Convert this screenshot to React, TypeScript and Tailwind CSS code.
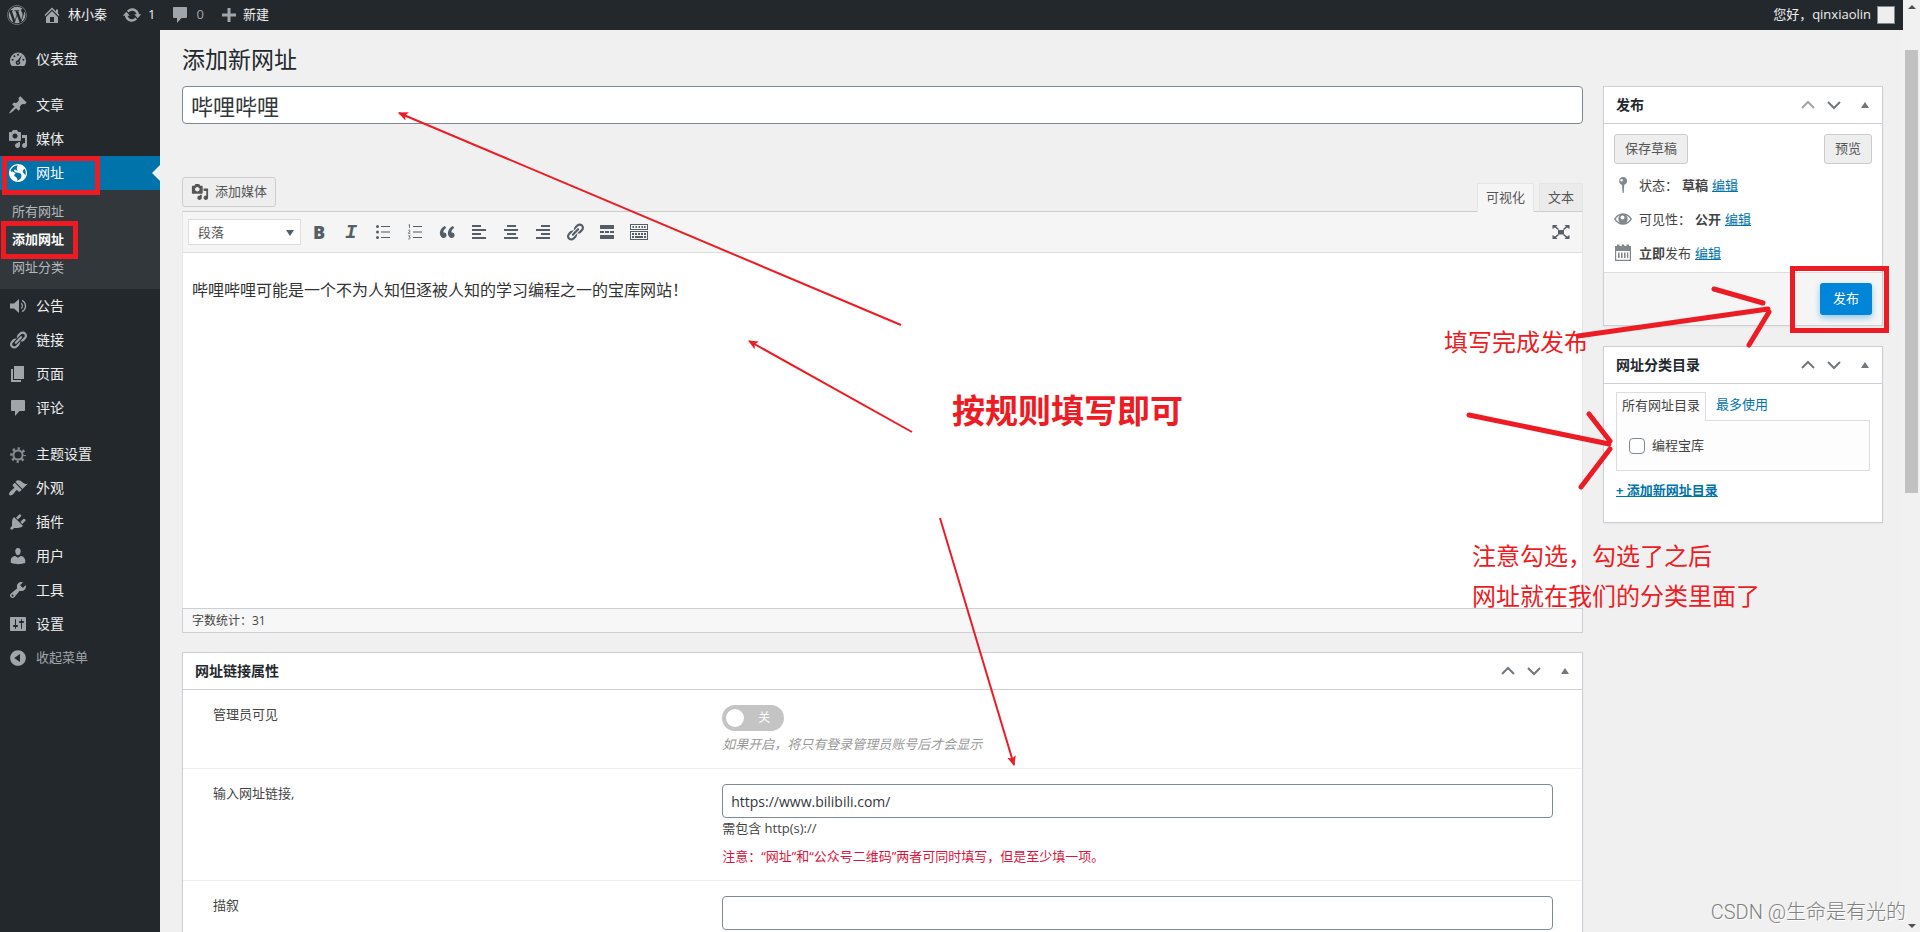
import React from "react";
import { FaWordpress } from "react-icons/fa";

interface MenuEntry {
  label: string;
  icon: React.ReactNode;
}

interface DashIconProps {
  d: string;
  className?: string;
}

const FONT = "font-['Open_Sans','Noto_Sans_CJK_SC',sans-serif]";

// 20x20 glyphs used through the admin screens
const DashIcon: React.FC<DashIconProps> = ({ d, className = "size-5" }) => (
  <svg viewBox="0 0 20 20" fill="currentColor" fillRule="evenodd" className={`shrink-0 ${className}`} aria-hidden="true">
    <path d={d} />
  </svg>
);

const ICONS = {
  home: "M16 8.5l1.53 1.53-1.06 1.06L10 4.6l-6.47 6.49-1.06-1.06L10 2.5l4 4v-2h2v4zm-6-2.46l6 5.99V18H4v-5.97zM12 17v-5H8v5h4z",
  update:
    "M10.2 3.28c3.53 0 6.43 2.61 6.92 6h2.08l-3.5 4-3.5-4h2.32c-.45-1.97-2.21-3.45-4.32-3.45-1.45 0-2.73.71-3.54 1.78L4.95 5.66C6.23 4.2 8.11 3.28 10.2 3.28zm-.4 13.44c-3.52 0-6.43-2.61-6.92-6H.8l3.5-4c1.17 1.33 2.33 2.67 3.5 4H5.48c.45 1.97 2.21 3.45 4.32 3.45 1.45 0 2.73-.71 3.54-1.78l1.71 1.95c-1.28 1.46-3.15 2.38-5.25 2.38z",
  comment: "M4 2h12c.6 0 1 .4 1 1v9c0 .6-.4 1-1 1h-4.5L7 18v-5H4c-.6 0-1-.4-1-1V3c0-.6.4-1 1-1z",
  plus: "M8.5 3h3v5.5H17v3h-5.5V17h-3v-5.5H3v-3h5.5z",
  dashboard:
    "M3.76 17h12.48c1.34-1.63 1.98-3.76 1.75-6C17.54 6.97 14.14 3.5 10 3.5S2.46 6.97 2.01 11c-.23 2.24.41 4.37 1.75 6zM10 4.8a1 1 0 1 1 0 2 1 1 0 0 1 0-2zM6.4 6.2a1 1 0 1 1 0 2 1 1 0 0 1 0-2zM4.6 9.8a1 1 0 1 1 0 2 1 1 0 0 1 0-2zM15.4 9.8a1 1 0 1 1 0 2 1 1 0 0 1 0-2zM13.9 5.9l-2.3 6.3a2.2 2.2 0 1 1-2-.8zM10 13a.8.8 0 1 0 0 1.6.8.8 0 0 0 0-1.6z",
  post: "M10.44 3.02l1.82-1.82 6.36 6.35-1.83 1.82c-1.05-.68-2.48-.57-3.41.36l-.75.75c-.92.93-1.04 2.35-.35 3.41l-1.83 1.82-2.41-2.41-2.8 2.79c-.42.42-3.38 2.71-3.8 2.29s1.86-3.39 2.28-3.81l2.79-2.79L4.1 9.36l1.83-1.82c1.05.69 2.48.57 3.4-.36l.75-.75c.93-.92 1.05-2.35.36-3.41z",
  media:
    "M13 11V4c0-.55-.45-1-1-1h-1.67L9 1H5L3.67 3H2c-.55 0-1 .45-1 1v7c0 .55.45 1 1 1h10c.55 0 1-.45 1-1zM7 4.5c1.38 0 2.5 1.12 2.5 2.5S8.38 9.5 7 9.5 4.5 8.38 4.5 7 5.62 4.5 7 4.5zM14 6h5v10.5c0 1.38-1.12 2.5-2.5 2.5S14 17.88 14 16.5s1.12-2.5 2.5-2.5c.17 0 .34.02.5.05V9h-3V6zm-4 8.05V13h2v3.5c0 1.38-1.12 2.5-2.5 2.5S7 17.88 7 16.5 8.12 14 9.5 14c.17 0 .34.02.5.05z",
  globe:
    "M9 0C4.03 0 0 4.03 0 9s4.03 9 9 9 9-4.03 9-9-4.03-9-9-9zm3.46 11.95c0 1.47-.8 3.3-4.06 4.7.3-4.17-2.52-3.69-3.2-5 .126-1.1.804-2.063 1.8-2.55-1.552-.266-3-.96-4.18-2 .05.47.28.904.64 1.21-.782-.295-1.458-.817-1.94-1.5.977-3.225 3.883-5.482 7.25-5.63-.84 1.38-1.5 4.13 0 5.57C7.23 7 6.26 5 5.41 5.79c-1.13 1.06.33 2.51 3.42 3.08 3.29.59 3.66 1.58 3.63 3.08zm1.34-4c-.32-1.11.62-2.23 1.69-3.14 1.356 1.955 1.67 4.45.84 6.68-.77-1.89-2.17-2.32-2.53-3.54z",
  volume:
    "M2 7.5h4L11 3v14l-5-4.5H2zM13 6.8c1.3.7 2 1.8 2 3.2s-.7 2.5-2 3.2v-1.4c.6-.5.9-1.1.9-1.8s-.3-1.3-.9-1.8zM14 3.8c2.7 1 4.2 3.3 4.2 6.2s-1.5 5.2-4.2 6.2v-1.5c1.8-.9 2.8-2.6 2.8-4.7S15.8 6.2 14 5.3z",
  links:
    "M17.74 2.76c1.68 1.69 1.68 4.41 0 6.1l-1.53 1.52c-1.12 1.12-2.7 1.47-4.14 1.09l2.62-2.61.76-.77.76-.76c.84-.84.84-2.2 0-3.04-.84-.85-2.2-.85-3.04 0l-.77.76-3.38 3.38c-.37-1.44-.02-3.02 1.1-4.14l1.52-1.53c1.69-1.68 4.42-1.68 6.1 0zM8.59 13.43l5.34-5.34c.42-.42.42-1.1 0-1.52-.44-.43-1.13-.39-1.53 0l-5.33 5.34c-.42.42-.42 1.1 0 1.52.44.43 1.13.39 1.52 0zm-.76 2.29l4.14-4.15c.38 1.44.03 3.02-1.09 4.14l-1.52 1.53c-1.69 1.68-4.41 1.68-6.1 0-1.68-1.68-1.68-4.42 0-6.1l1.53-1.52c1.12-1.12 2.7-1.47 4.14-1.1l-4.14 4.15c-.85.84-.85 2.2 0 3.05.84.84 2.2.84 3.04 0z",
  page: "M6 15V2h10v13H6zm-1 1h8v2H3V5h2v11z",
  appearance:
    "M14.48 11.06L7.41 3.99l1.5-1.5c.5-.56 2.3-.47 3.51.32 1.21.8 1.43 1.28 2.91 2.1 1.18.64 2.45 1.26 4.45.85zm-.71.71L6.7 4.7 4.93 6.47c-.39.39-.39 1.02 0 1.41l1.06 1.06c.39.39.39 1.03 0 1.42-.6.6-1.43 1.11-2.21 1.69-.35.26-.7.53-1.01.84C1.43 14.23.4 16.08 1.4 17.07c.99 1 2.84-.03 4.18-1.36.31-.31.58-.66.85-1.02.57-.78 1.08-1.61 1.69-2.21.39-.39 1.02-.39 1.41 0l1.06 1.06c.39.39 1.02.39 1.41 0z",
  plugins:
    "M13.11 4.36L9.87 7.6 8 5.73l3.24-3.24c.35-.34 1.05-.2 1.56.32.52.51.66 1.21.31 1.55zm-8 1.77l.91-1.12 9.01 9.01-1.19.84c-.71.71-2.63 1.16-3.82 1.16H6.14L4.9 17.26c-.59.59-1.54.59-2.12 0-.59-.58-.59-1.53 0-2.12l1.24-1.24v-3.88c0-1.13.4-3.19 1.09-3.89zm7.26 3.97l3.24-3.24c.34-.35 1.04-.21 1.55.31.52.51.66 1.21.31 1.55l-3.24 3.25z",
  users:
    "M10 9.25c-2.27 0-2.73-3.44-2.73-3.44C7 4.02 7.82 2 9.97 2c2.16 0 2.98 2.02 2.71 3.81 0 0-.41 3.44-2.68 3.44zm0 2.57L12.72 10c2.39 0 4.52 2.33 4.52 4.53v2.49s-3.65 1.13-7.24 1.13c-3.65 0-7.24-1.13-7.24-1.13v-2.49c0-2.25 1.94-4.48 4.47-4.48z",
  tools:
    "M16.68 9.77c-1.34 1.34-3.3 1.67-4.95.99l-5.41 6.52c-.99.99-2.59.99-3.58 0s-.99-2.59 0-3.57l6.52-5.42c-.68-1.65-.35-3.61.99-4.95 1.28-1.28 3.12-1.62 4.72-1.06l-2.89 2.89 2.82 2.82 2.86-2.87c.53 1.58.18 3.39-1.08 4.65zM3.81 16.21c.4.39 1.04.39 1.43 0 .4-.4.4-1.04 0-1.43-.39-.4-1.03-.4-1.43 0-.39.39-.39 1.03 0 1.43z",
  settings:
    "M18 16V4c0-.55-.45-1-1-1H3c-.55 0-1 .45-1 1v12c0 .55.45 1 1 1h14c.55 0 1-.45 1-1zM8 11h1c.55 0 1 .45 1 1s-.45 1-1 1H8v1.5c0 .28-.22.5-.5.5s-.5-.22-.5-.5V13H6c-.55 0-1-.45-1-1s.45-1 1-1h1V5.5c0-.28.22-.5.5-.5s.5.22.5.5V11zm5-2h-1c-.55 0-1-.45-1-1s.45-1 1-1h1V5.5c0-.28.22-.5.5-.5s.5.22.5.5V7h1c.55 0 1 .45 1 1s-.45 1-1 1h-1v5.5c0 .28-.22.5-.5.5s-.5-.22-.5-.5V9z",
  collapse:
    "M10 2.16c4.33 0 7.84 3.51 7.84 7.84s-3.51 7.84-7.84 7.84S2.16 14.33 2.16 10 5.71 2.16 10 2.16zm2 11.72V6.12L6.18 9.97z",
  quote:
    "M9.49 13.22c0-.74-.2-1.38-.61-1.9-.62-.78-1.83-.88-2.53-.72-.29-1.65 1.11-3.75 2.92-4.65L7.88 4c-2.73 1.3-5.42 4.28-4.96 8.05C3.21 14.43 4.59 16 6.54 16c.85 0 1.56-.25 2.12-.75s.83-1.18.83-2.03zm8.05 0c0-.74-.2-1.38-.61-1.9-.63-.78-1.83-.88-2.53-.72-.29-1.65 1.11-3.75 2.92-4.65L15.93 4c-2.73 1.3-5.41 4.28-4.95 8.05.29 2.38 1.66 3.95 3.61 3.95.85 0 1.56-.25 2.12-.75s.83-1.18.83-2.03z",
  alignLeft: "M3 3h9v2H3zM3 7h14v2H3zM3 11h9v2H3zM3 15h14v2H3z",
  alignCenter: "M6 3h9v2H6zM3 7h14v2H3zM6 11h9v2H6zM3 15h14v2H3z",
  alignRight: "M8 3h9v2H8zM3 7h14v2H3zM8 11h9v2H8zM3 15h14v2H3z",
  bullets:
    "M4.5 3a1.5 1.5 0 1 1 0 3 1.5 1.5 0 0 1 0-3zM4.5 8.5a1.5 1.5 0 1 1 0 3 1.5 1.5 0 0 1 0-3zM4.5 14a1.5 1.5 0 1 1 0 3 1.5 1.5 0 0 1 0-3zM8 4h9v1H8zM8 9.500h9v1H8zM8 15h9v1H8z",
  more: "M3 3h14v4H3zM3 9h4v2H3zM8 9h4v2H8zM13 9h4v2h-4zM3 13h14v4H3z",
  kitchen:
    "M1 2h18v6H1zM2 3v4h16V3zM3.5 4H5v2H3.5zM6.5 4H8v2H6.5zM9.5 4H11v2H9.5zM12.5 4H14v2h-1.5zM15 4h1.5v2H15zM1 9h18v9H1zM2 10v7h16v-7zM3 11h2v2H3zM6 11h2v2H6zM9 11h2v2H9zM12 11h2v2h-2zM15 11h2v2h-2zM3 14h2v2H3zM6 14h8v2H6zM15 14h2v2h-2z",
  fullscreen:
    "M7 8h6v4.500H7zM1.500 3h5L5.100 4.400 8 6.900 7 8 3.900 5.500 1.500 7zM18.500 3h-5l1.400 1.400L12 6.900 13 8l3.100-2.500L18.500 7zM1.500 17h5l-1.400-1.400L8 13.100 7 12l-3.100 2.500L1.500 13zM18.500 17h-5l1.400-1.400-2.900-2.500 1-1.100 3.100 2.500 2.400-1.500z",
  pin: "M10 2a4 4 0 0 1 1.3 7.8L10.7 18H9.6L9 9.8A4 4 0 0 1 10 2zM8.6 4a1.300 1.300 0 1 0 0 2.600 1.300 1.300 0 0 0 0-2.600z",
  eye: "M1 10c2.200-3.700 5.300-5.800 9-5.800s6.800 2.100 9 5.800c-2.200 3.700-5.300 5.800-9 5.800S3.200 13.700 1 10zM2.700 10c1.200 1.800 2.600 3 4.200 3.800A5.300 5.300 0 0 1 6.900 6.200C5.300 7 3.900 8.200 2.700 10zM17.300 10c-1.200-1.800-2.600-3-4.200-3.800a5.300 5.300 0 0 1 0 7.600c1.600-.8 3-2 4.200-3.800zM9.500 6.500a2 2 0 1 0 0 4 2 2 0 0 0 0-4z",
  calendar:
    "M4 1.500h2.500V3H8.700V1.500h2.600V3h2.200V1.500H16V3h2v15H2V3h2zM3.200 8v8.800h13.600V8zM5 9.500h1.600V15H5zM8 9.500h1.600V15H8zM11 9.500h1.600V15H11zM13.900 9.500h1.400V15h-1.400z",
};

const GearIcon = () => (
  <svg viewBox="0 0 20 20" fill="none" stroke="currentColor" className="size-5 shrink-0 opacity-80" aria-hidden="true">
    <circle cx="10" cy="11" r="4.600" strokeWidth="2" />
    <circle cx="10" cy="11" r="6.500" strokeWidth="2.600" strokeDasharray="2.300 2.805" strokeDashoffset="1.150" />
  </svg>
);

const NumberedIcon = () => (
  <svg viewBox="0 0 20 20" fill="none" stroke="currentColor" className="size-5" aria-hidden="true">
    <path d="M8 4.500h9M8 10h9M8 15.500h9" />
    <path strokeWidth="0.8" d="M3.500 3.200l1-.7v3.500M3.300 8.500c.6-.8 2-.6 1.700.5L3.300 11.400h2M3.300 13.800h1.800l-1 1.300c1.600 0 1.500 2.200-.9 1.900" />
  </svg>
);

const CONTENT_MENU: MenuEntry[] = [
  { label: "文章", icon: <DashIcon d={ICONS.post} /> },
  { label: "媒体", icon: <DashIcon d={ICONS.media} /> },
];

const MODULE_MENU: MenuEntry[] = [
  { label: "公告", icon: <DashIcon d={ICONS.volume} /> },
  { label: "链接", icon: <DashIcon d={ICONS.links} /> },
  { label: "页面", icon: <DashIcon d={ICONS.page} /> },
  { label: "评论", icon: <DashIcon d={ICONS.comment} /> },
];

const SYSTEM_MENU: MenuEntry[] = [
  { label: "主题设置", icon: <GearIcon /> },
  { label: "外观", icon: <DashIcon d={ICONS.appearance} /> },
  { label: "插件", icon: <DashIcon d={ICONS.plugins} /> },
  { label: "用户", icon: <DashIcon d={ICONS.users} /> },
  { label: "工具", icon: <DashIcon d={ICONS.tools} /> },
  { label: "设置", icon: <DashIcon d={ICONS.settings} /> },
];

const MenuRow: React.FC<MenuEntry> = ({ label, icon }) => (
  <li>
    <a href="#" className="flex h-[34px] items-center gap-2 pl-2 text-sm text-[#eeeeee]">
      <span className="text-[#a0a5aa]">{icon}</span>
      {label}
    </a>
  </li>
);

const AdminBar = () => (
  <header className="flex h-[30px] shrink-0 items-center bg-[#23282d] pr-2 pb-px pl-[7px] text-[13px] text-[#eeeeee]">
    <a href="#" aria-label="WordPress" className="mr-[15px] text-[#a0a5aa]"><FaWordpress size={20} /></a>
    <a href="#" className="mr-[15px] flex items-center gap-1.5">
      <DashIcon d={ICONS.home} className="size-5 text-[#a0a5aa]" />林小秦
    </a>
    <a href="#" className="mr-[15px] flex items-center gap-1.5">
      <DashIcon d={ICONS.update} className="size-5 text-[#a0a5aa]" />1
    </a>
    <a href="#" className="mr-[15px] flex items-center gap-1.5 text-[#a0a5aa]">
      <DashIcon d={ICONS.comment} />0
    </a>
    <a href="#" className="flex items-center gap-1">
      <DashIcon d={ICONS.plus} className="size-5 text-[#a0a5aa]" />新建
    </a>
    <a href="#" className="ml-auto flex items-center gap-1.5">
      您好，qinxiaolin
      <span className="size-[18px] border border-[#82878c] bg-[#eeeeee]" />
    </a>
  </header>
);

const SideMenu = () => (
  <nav className="w-40 shrink-0 bg-[#23282d] pt-3">
    <ul>
      <MenuRow label="仪表盘" icon={<DashIcon d={ICONS.dashboard} />} />
    </ul>
    <ul className="mt-3">
      {CONTENT_MENU.map((item) => <MenuRow key={item.label} {...item} />)}
      <li>
        <a href="#" className="relative flex h-[34px] items-center gap-2 bg-[#0073aa] pl-2 text-sm text-white">
          <svg viewBox="-1 -1 20 20" fill="currentColor" className="size-5" aria-hidden="true"><path d={ICONS.globe} /></svg>
          网址
          <span className="absolute right-0 border-8 border-transparent border-r-[#f0f0f0]" />
        </a>
        <ul className="bg-[#32373c] pt-[7px] pb-2 pl-3 text-[13px] leading-7 text-[#b4b9be]">
          <li><a href="#">所有网址</a></li>
          <li><a href="#" className="font-bold text-white">添加网址</a></li>
          <li><a href="#">网址分类</a></li>
        </ul>
      </li>
      {MODULE_MENU.map((item) => <MenuRow key={item.label} {...item} />)}
    </ul>
    <ul className="mt-3">
      {SYSTEM_MENU.map((item) => <MenuRow key={item.label} {...item} />)}
    </ul>
    <button className="flex h-[34px] items-center gap-2 pl-2 text-[13px] text-[#a0a5aa]">
      <DashIcon d={ICONS.collapse} />收起菜单
    </button>
  </nav>
);

interface PostBoxProps {
  title: string;
  first?: boolean;
  className?: string;
  children: React.ReactNode;
}

const PostBox: React.FC<PostBoxProps> = ({ title, first = false, className = "", children }) => (
  <section className={`border border-[#ccd0d4] bg-white shadow-xs ${className}`}>
    <div className="flex h-[37px] items-center border-b border-[#ccd0d4] pr-[13px] pl-3 text-[#72777c]">
      <h2 className="flex-1 text-sm font-bold text-[#23282d]">{title}</h2>
      <button aria-label="上移" className={`mr-3 ${first ? "text-[#a0a5aa]" : ""}`}>
        <svg viewBox="0 0 14 10" fill="none" stroke="currentColor" strokeWidth="2" className="h-2.5 w-3.5"><path d="M1 8l6-6 6 6" /></svg>
      </button>
      <button aria-label="下移" className="mr-5">
        <svg viewBox="0 0 14 10" fill="none" stroke="currentColor" strokeWidth="2" className="h-2.5 w-3.5"><path d="M1 2l6 6 6-6" /></svg>
      </button>
      <button aria-label="切换面板">
        <svg viewBox="0 0 8 6" fill="currentColor" className="h-1.5 w-2"><path d="M4 0l4 6H0z" /></svg>
      </button>
    </div>
    {children}
  </section>
);

const TOOLBAR: { label: string; icon: React.ReactNode }[] = [
  { label: "粗体", icon: <b className="font-['Open_Sans'] text-lg leading-5 font-extrabold">B</b> },
  { label: "斜体", icon: <i className="pt-0.5 font-['Liberation_Mono'] text-xl leading-5 font-bold">I</i> },
  { label: "项目符号列表", icon: <DashIcon d={ICONS.bullets} /> },
  { label: "编号列表", icon: <NumberedIcon /> },
  { label: "段落引用", icon: <DashIcon d={ICONS.quote} /> },
  { label: "左对齐", icon: <DashIcon d={ICONS.alignLeft} /> },
  { label: "居中对齐", icon: <DashIcon d={ICONS.alignCenter} /> },
  { label: "右对齐", icon: <DashIcon d={ICONS.alignRight} /> },
  { label: "插入链接", icon: <DashIcon d={ICONS.links} /> },
  { label: "插入More标签", icon: <DashIcon d={ICONS.more} /> },
  { label: "工具栏切换", icon: <DashIcon d={ICONS.kitchen} /> },
];

const Editor = () => (
  <div className="mt-[53px]">
    <div className="flex items-end justify-between">
      <button className="mb-1 flex h-[30px] items-center gap-1.5 rounded-[3px] border border-[#cccccc] bg-[#eeeeee] px-2 text-[13px] text-[#555555]">
        <DashIcon d={ICONS.media} className="size-[18px]" />添加媒体
      </button>
      <div className="-mb-px flex gap-[5px] text-[13px] text-[#555555]">
        <button className="relative h-[29px] border border-b-0 border-[#e5e5e5] bg-[#f5f5f5] px-2">可视化</button>
        <button className="h-[29px] border border-[#e5e5e5] border-b-[#cccccc] bg-[#ebebeb] px-2">文本</button>
      </div>
    </div>
    <div className="border border-b-0 border-[#e5e5e5] border-t-[#cccccc] bg-white">
      <div className="flex h-[41px] items-center border-b border-[#dddddd] bg-[#f5f5f5] px-[5px] text-[#555d66]">
        <div className="relative mr-0.5">
          <select aria-label="段落格式" className="h-[26px] w-[113px] appearance-none border border-[#dddddd] bg-white pl-[9px] text-[13px] text-[#555555]">
            <option>段落</option>
          </select>
          <svg viewBox="0 0 8 6" fill="currentColor" className="absolute top-[11px] right-[7px] h-1.5 w-2" aria-hidden="true"><path d="M0 0h8L4 6z" /></svg>
        </div>
        {TOOLBAR.map((tool) => (
          <button key={tool.label} aria-label={tool.label} className="flex size-8 items-center justify-center">{tool.icon}</button>
        ))}
        <button aria-label="全屏" className="ml-auto flex size-8 items-center justify-center"><DashIcon d={ICONS.fullscreen} /></button>
      </div>
      <textarea
        aria-label="正文"
        className="block h-[355px] w-full resize-none px-[9px] pt-[25px] text-base leading-6 text-[#333333] outline-none"
        defaultValue="哔哩哔哩可能是一个不为人知但逐被人知的学习编程之一的宝库网站！"
      />
    </div>
    <div className="h-[25px] border border-[#ccd0d4] bg-[#f7f7f7] pl-[9px] text-xs leading-6 text-[#444444]">字数统计：31</div>
  </div>
);

interface FieldRowProps {
  id: string;
  label: string;
  children: React.ReactNode;
}

const FieldRow: React.FC<FieldRowProps> = ({ id, label, children }) => (
  <div className="grid grid-cols-[38%_1fr] border-b border-[#eeeeee] py-[14px] pr-[29px] pl-[30px] text-[13px] leading-5 text-[#444444]">
    <label htmlFor={id}>{label}</label>
    <div className="pt-px">{children}</div>
  </div>
);

const LINK_INPUT = "block h-[34px] w-full rounded border border-[#7e8993] bg-white px-2 text-sm text-[#32373c]";

const LinkFields = () => (
  <PostBox title="网址链接属性" className="mt-[19px]">
    <FieldRow id="admin-only" label="管理员可见">
      <button id="admin-only" role="switch" aria-checked="false" className="flex h-[26px] w-[62px] items-center rounded-full bg-[#c4c4c4] px-1 text-xs text-white">
        <span className="mr-[14px] size-[18px] rounded-full bg-white" />关
      </button>
      <p className="mt-[3px] text-[#999999] italic">如果开启，将只有登录管理员账号后才会显示</p>
    </FieldRow>
    <FieldRow id="site-link" label="输入网址链接,">
      <input id="site-link" type="text" className={LINK_INPUT} defaultValue="https://www.bilibili.com/" />
      <p>需包含 http(s)://</p>
      <p className="mt-2 text-[#dc143c]">注意：“网址”和“公众号二维码”两者可同时填写，但是至少填一项。</p>
    </FieldRow>
    <FieldRow id="site-desc" label="描叙">
      <input id="site-desc" type="text" className={LINK_INPUT} />
    </FieldRow>
  </PostBox>
);

const GREY_BUTTON = "h-[30px] rounded-[3px] border border-[#cccccc] bg-[#eeeeee] px-2.5 text-[13px] text-[#555555]";
const EDIT_LINK = "ml-1 text-[#0073aa] underline";

const PublishBox = () => (
  <PostBox title="发布" first>
    <div className="flex justify-between px-2.5 pt-2.5 pb-1">
      <button className={GREY_BUTTON}>保存草稿</button>
      <button className={GREY_BUTTON}>预览</button>
    </div>
    <ul className="px-[9px] pb-0.5 text-[13px] leading-[34px] text-[#444444]">
      <li className="flex items-center">
        <DashIcon d={ICONS.pin} className="mr-1.5 size-5 text-[#82878c]" />状态：<b className="ml-1">草稿</b><a href="#" className={EDIT_LINK}>编辑</a>
      </li>
      <li className="flex items-center">
        <DashIcon d={ICONS.eye} className="mr-1.5 size-5 text-[#82878c]" />可见性：<b className="ml-1">公开</b><a href="#" className={EDIT_LINK}>编辑</a>
      </li>
      <li className="flex items-center">
        <DashIcon d={ICONS.calendar} className="mr-1.5 size-5 text-[#82878c]" /><b>立即</b>发布<a href="#" className={EDIT_LINK}>编辑</a>
      </li>
    </ul>
    <div className="flex justify-end border-t border-[#dddddd] bg-[#f5f5f5] p-2.5">
      <button className="h-8 rounded-[3px] bg-[#0085d8] px-[13px] text-[13px] text-white shadow-[0_3px_6px_#0085d866]">发布</button>
    </div>
  </PostBox>
);

const CategoryBox = () => (
  <PostBox title="网址分类目录" className="mt-5">
    <div className="px-3 pt-2 pb-[22px] text-[13px] text-[#444444]">
      <div className="flex">
        <button className="relative -mb-px h-[29px] border border-b-0 border-[#dddddd] bg-[#fdfdfd] px-[5px] pb-0.5">所有网址目录</button>
        <button className="ml-2.5 pb-0.5 text-[#0073aa]">最多使用</button>
      </div>
      <div className="flex h-[51px] items-center border border-[#dddddd] bg-[#fdfdfd] pl-3">
        <label className="flex items-center gap-[7px]">
          <input type="checkbox" className="size-4 appearance-none rounded border border-[#7e8993] bg-white" />
          编程宝库
        </label>
      </div>
      <a href="#" className="mt-[9px] block font-bold leading-5 text-[#0073aa] underline">+ 添加新网址目录</a>
    </div>
  </PostBox>
);

// Red guide marks drawn over the page
const Annotations = () => (
  <div className="pointer-events-none absolute inset-0 text-2xl text-[#ed1c24]">
    <div className="absolute top-[156px] left-0.5 h-[39px] w-[98px] border-5 border-[#ed1c24]" />
    <div className="absolute top-[221px] left-px h-[38px] w-[77px] border-5 border-[#ed1c24]" />
    <div className="absolute top-[266px] right-[31px] h-[67px] w-[99px] border-5 border-[#ed1c24]" />
    <svg className="absolute inset-0 size-full" fill="none" stroke="#ed1c24" aria-hidden="true">
      <defs>
        <marker id="tip" viewBox="0 0 9 8" refX="8" refY="4" markerWidth="10" markerHeight="9" markerUnits="userSpaceOnUse" orient="auto">
          <path d="M0 0l9 4-9 4 2-4z" fill="#ed1c24" stroke="none" />
        </marker>
      </defs>
      <g strokeWidth="2">
        <path d="M901 325L399 113" markerEnd="url(#tip)" />
        <path d="M912 432L749 341" markerEnd="url(#tip)" />
        <path d="M940 518L1014 765" markerEnd="url(#tip)" />
      </g>
      <g strokeWidth="5" strokeLinecap="round">
        <path d="M1578 336L1768 309M1714 289L1763 303M1769 312L1749 345" />
        <path d="M1469 415L1609 444M1589 414L1610 441M1610 449L1581 487" />
      </g>
    </svg>
    <p className="absolute top-[391px] left-[952px] text-[33px] leading-10 font-bold">按规则填写即可</p>
    <p className="absolute top-[322px] left-[1444px] leading-10">填写完成发布</p>
    <p className="absolute top-[536px] left-[1472px] leading-10">注意勾选，勾选了之后<br />网址就在我们的分类里面了</p>
    <p className="absolute right-[14px] bottom-1 font-[Roboto,'Noto_Sans_CJK_SC',sans-serif] text-xl leading-8 font-light text-[#808080] [text-shadow:1px_1px_0_#ffffff]">
      CSDN @生命是有光的
    </p>
  </div>
);

const ScrollTrack = () => (
  <div className="flex w-[17px] shrink-0 flex-col items-center justify-between bg-[#f1f1f1] text-[#505050]">
    <svg viewBox="0 0 8 4" fill="currentColor" className="mt-[5px] h-1 w-2" aria-hidden="true"><path d="M4 0l4 4H0z" /></svg>
    <div className="mt-[41px] h-[443px] w-[13px] bg-[#c1c1c1]" />
    <svg viewBox="0 0 8 4" fill="currentColor" className="mt-auto mb-1 h-1 w-2" aria-hidden="true"><path d="M0 0h8L4 4z" /></svg>
  </div>
);

export default function App() {
  return (
    <div className={`relative flex h-screen overflow-hidden bg-[#f0f0f0] ${FONT}`}>
      <div className="flex min-w-0 flex-1 flex-col">
        <AdminBar />
        <div className="flex min-h-0 flex-1">
          <SideMenu />
          <main className="min-w-0 flex-1 overflow-hidden pt-3 pr-5 pl-[22px]">
            <h1 className="text-[23px] leading-[34px] text-[#23282d]">添加新网址</h1>
            <div className="mt-2.5 flex items-start gap-5">
              <div className="min-w-0 flex-1">
                <input
                  type="text"
                  aria-label="标题"
                  className="block h-[38px] w-full rounded border border-[#7e8993] bg-white px-2 text-[22px] text-[#32373c]"
                  defaultValue="哔哩哔哩"
                />
                <Editor />
                <LinkFields />
              </div>
              <aside className="w-[280px] shrink-0">
                <PublishBox />
                <CategoryBox />
              </aside>
            </div>
          </main>
        </div>
      </div>
      <ScrollTrack />
      <Annotations />
    </div>
  );
}
